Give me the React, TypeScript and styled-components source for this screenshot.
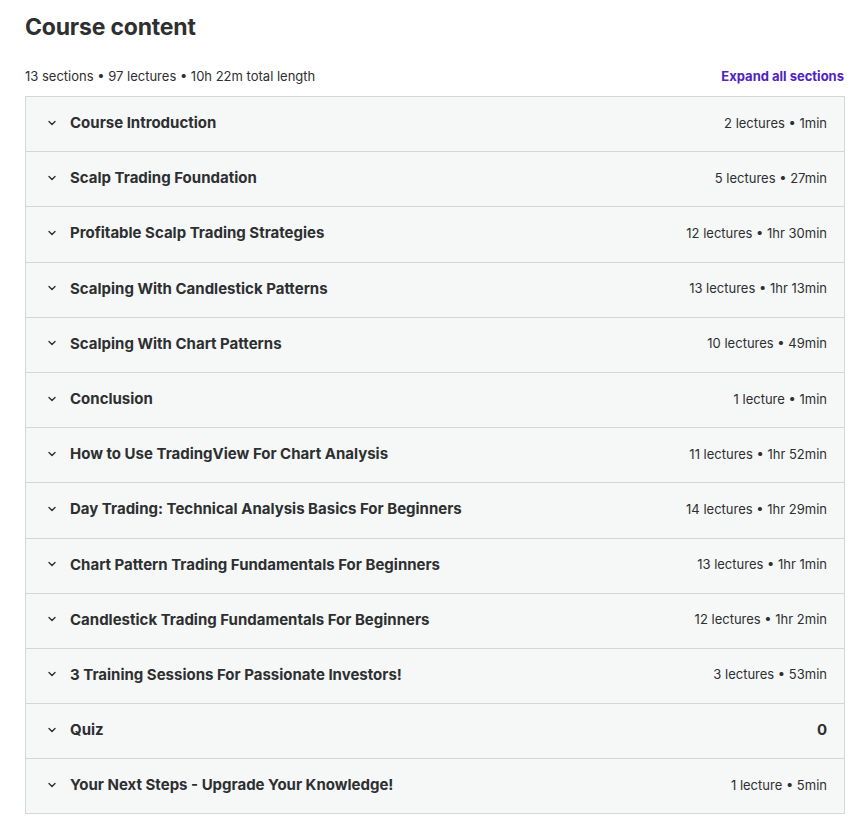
import React from "react";
import styled, { createGlobalStyle } from "styled-components";

const Global = createGlobalStyle`
  html, body { margin: 0; padding: 0; background: #fff; }
  body { font-family: Inter, "Noto Sans", sans-serif; color: #2d2f31; }
`;

const Page = styled.div`
  padding: 10px 17px 0 25px;
  width: 820px;
`;

const Title = styled.h2`
  margin: 0;
  font-size: 23px;
  font-weight: 700;
  line-height: 34px;
  letter-spacing: -0.2px;
  color: #2d2f31;
`;

const Bar = styled.div`
  display: flex;
  justify-content: space-between;
  align-items: center;
  margin-top: 22px;
  height: 20px;
  margin-bottom: 10px;
`;

const Stats = styled.span`
  font-size: 13px;
  font-weight: 400;
  color: #2d2f31;
`;

const Expand = styled.button`
  border: none;
  background: none;
  padding: 0;
  font-family: inherit;
  font-size: 13px;
  font-weight: 700;
  color: #5022c3;
  cursor: pointer;
  margin-right: 1px;
`;

const List = styled.div`
  border: 1px solid #d4d6d8;
  border-bottom: none;
`;

const Row = styled.div`
  display: flex;
  align-items: center;
  box-sizing: content-box;
  height: 51.2px;
  padding: 0 17px 3px 19px;
  background: #f6f7f7;
  border-bottom: 1px solid #d4d6d8;
`;

const Chevron = styled.span`
  display: flex;
  width: 14px;
  margin-right: 11px;
  color: #2d2f31;
`;

const Name = styled.span`
  flex: 1;
  font-size: 15px;
  font-weight: 700;
  color: #2d2f31;
`;

const Meta = styled.span<{ $bold?: boolean }>`
  font-size: ${(p) => (p.$bold ? "15px" : "13px")};
  font-weight: ${(p) => (p.$bold ? 700 : 400)};
  color: #2d2f31;
`;

const sections: [string, string, boolean?][] = [
  ["Course Introduction", "2 lectures • 1min"],
  ["Scalp Trading Foundation", "5 lectures • 27min"],
  ["Profitable Scalp Trading Strategies", "12 lectures • 1hr 30min"],
  ["Scalping With Candlestick Patterns", "13 lectures • 1hr 13min"],
  ["Scalping With Chart Patterns", "10 lectures • 49min"],
  ["Conclusion", "1 lecture • 1min"],
  ["How to Use TradingView For Chart Analysis", "11 lectures • 1hr 52min"],
  ["Day Trading: Technical Analysis Basics For Beginners", "14 lectures • 1hr 29min"],
  ["Chart Pattern Trading Fundamentals For Beginners", "13 lectures • 1hr 1min"],
  ["Candlestick Trading Fundamentals For Beginners", "12 lectures • 1hr 2min"],
  ["3 Training Sessions For Passionate Investors!", "3 lectures • 53min"],
  ["Quiz", "0", true],
  ["Your Next Steps - Upgrade Your Knowledge!", "1 lecture • 5min"],
];

const ChevronIcon = () => (
  <svg width="14" height="14" viewBox="0 0 14 14" fill="none">
    <path d="M4 5.5 L7 8.5 L10 5.5" stroke="currentColor" strokeWidth="1.4" strokeLinecap="round" strokeLinejoin="round" />
  </svg>
);

export default function App() {
  return (
    <Page>
      <Global />
      <Title>Course content</Title>
      <Bar>
        <Stats>13 sections • 97 lectures • 10h 22m total length</Stats>
        <Expand>Expand all sections</Expand>
      </Bar>
      <List>
        {sections.map(([name, meta, bold]) => (
          <Row key={name}>
            <Chevron>
              <ChevronIcon />
            </Chevron>
            <Name>{name}</Name>
            <Meta $bold={bold}>{meta}</Meta>
          </Row>
        ))}
      </List>
    </Page>
  );
}
